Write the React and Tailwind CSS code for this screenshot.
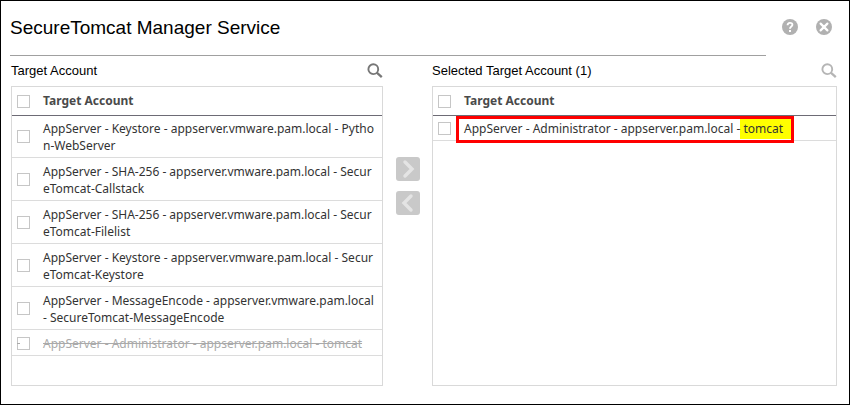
const accounts = [
  ['AppServer - Keystore - appserver.vmware.pam.local - Pytho', 'n-WebServer'],
  ['AppServer - SHA-256 - appserver.vmware.pam.local - Secur', 'eTomcat-Callstack'],
  ['AppServer - SHA-256 - appserver.vmware.pam.local - Secur', 'eTomcat-Filelist'],
  ['AppServer - Keystore - appserver.vmware.pam.local - Secur', 'eTomcat-Keystore'],
  ['AppServer - MessageEncode - appserver.vmware.pam.local', '- SecureTomcat-MessageEncode'],
];

function Checkbox({ label }) {
  return <span role="checkbox" aria-checked="false" aria-label={label} className="block size-[13px] shrink-0 border border-[#c6c6c6] bg-white" />;
}

function SearchIcon({ color }) {
  return (
    <svg width="16" height="16" viewBox="0 0 16 16" fill="none" stroke={color}>
      <circle cx="6.3" cy="6.2" r="4.9" strokeWidth="1.9" />
      <path d="M9.8 9.7 L14.8 14.2" strokeWidth="2.3" />
    </svg>
  );
}

function TableHeader() {
  return (
    <div className="flex h-[29px] items-center gap-[13px] border-b border-[#6d6b75] pl-[5px]">
      <Checkbox label="Select all" />
      <span className="-mt-px text-[12px] leading-[17px] font-bold text-[#4a4a4a]">Target Account</span>
    </div>
  );
}

function ArrowButton({ d, label }) {
  return (
    <button aria-label={label} className="block size-6 rounded-[3px] bg-[#c9c9c9]">
      <svg width="24" height="24" viewBox="0 0 24 24" fill="none" stroke="#e4e4e4" strokeWidth="3.4" strokeLinecap="round">
        <path d={d} />
      </svg>
    </button>
  );
}

export default function App() {
  return (
    <div className="flex h-[405px] w-[850px] flex-col border border-black bg-white font-['Noto_Sans',sans-serif]">
      <header className="flex h-[53px] items-center justify-between pr-[17px] pl-[9px] font-['Liberation_Sans',sans-serif]">
        <h1 className="text-[19px] leading-6 whitespace-nowrap text-black">SecureTomcat Manager Service</h1>
        <div className="-mt-px flex gap-[18px]">
          <svg width="16" height="16" viewBox="0 0 16 16" fill="none">
            <circle cx="8" cy="8" r="8" fill="#b1b1b1" />
            <path d="M5.6 6.2 C5.6 3.1 10.4 3.2 10.4 5.8 C10.4 7.5 8 7.6 8 9.7" stroke="#fff" strokeWidth="1.9" />
            <path d="M7 10.9 h2 v2 h-2 Z" fill="#fff" />
          </svg>
          <svg width="16" height="16" viewBox="0 0 16 16" fill="none">
            <circle cx="8" cy="8" r="8" fill="#b1b1b1" />
            <path d="M4.6 4.6 L11.4 11.4 M11.4 4.6 L4.6 11.4" stroke="#fff" strokeWidth="2.2" strokeLinecap="round" />
          </svg>
        </div>
      </header>
      <div className="mt-px ml-[9px] h-px w-[756px] bg-[#a0a0a0]" />

      <main className="flex pl-[10px]">
        <section className="w-[372px]">
          <div className="flex h-[30px] items-center justify-between font-['Liberation_Sans',sans-serif] text-[13px] text-black">
            <span className="-mt-px whitespace-nowrap">Target Account</span>
            <SearchIcon color="#777777" />
          </div>
          <div className="h-[300px] border border-[#d9d9d9]">
            <TableHeader />
            {accounts.map((lines, i) => (
              <div key={i} className={`${i === 0 ? 'h-[42px]' : 'h-[43px] pt-px'} flex items-start gap-[13px] border-b border-[#dcdcdc] pl-[5px]`}>
                <span className="mt-[14px]"><Checkbox label={lines[0]} /></span>
                <div className="mt-[4px] text-[12px] leading-[17px] whitespace-nowrap text-[#333333]">
                  <div>{lines[0]}</div>
                  <div>{lines[1]}</div>
                </div>
              </div>
            ))}
            <div className="flex h-[26px] items-center border-b border-[#dcdcdc] pt-px pl-[5px]">
              <div className="relative">
                <Checkbox label="Assigned account" />
                <span className="absolute top-[6px] left-0 h-px w-[3px] bg-[#aaaaaa]" />
              </div>
              <span className="ml-[13px] text-[12px] leading-[17px] whitespace-nowrap text-[#aaaaaa] line-through">AppServer - Administrator - appserver.pam.local - tomcat</span>
            </div>
          </div>
        </section>

        <div className="flex w-[49px] flex-col items-center gap-[10px] pt-[101px]">
          <ArrowButton label="Add" d="M9 5 L16 12 L9 19" />
          <ArrowButton label="Remove" d="M15 5 L8 12 L15 19" />
        </div>

        <section className="w-[405px]">
          <div className="flex h-[30px] items-center justify-between font-['Liberation_Sans',sans-serif] text-[13px] text-black">
            <span className="-mt-px whitespace-nowrap">Selected Target Account (1)</span>
            <SearchIcon color="#b5b5b5" />
          </div>
          <div className="h-[300px] border border-[#d9d9d9]">
            <TableHeader />
            <div className="relative flex h-[25px] items-center gap-[13px] border-b border-[#dcdcdc] pl-[5px]">
              <Checkbox label="Select tomcat" />
              <span className="relative z-10 text-[12px] leading-[17px] whitespace-nowrap text-[#333333]">AppServer - Administrator - appserver.pam.local - tomcat</span>
              <div className="absolute top-0 left-[23px] flex h-[27px] w-[338px] justify-end border-[3px] border-[#ff0000] bg-white">
                <div className="h-5 w-[51px] bg-[#ffff00]" />
              </div>
            </div>
          </div>
        </section>
      </main>
    </div>
  );
}
